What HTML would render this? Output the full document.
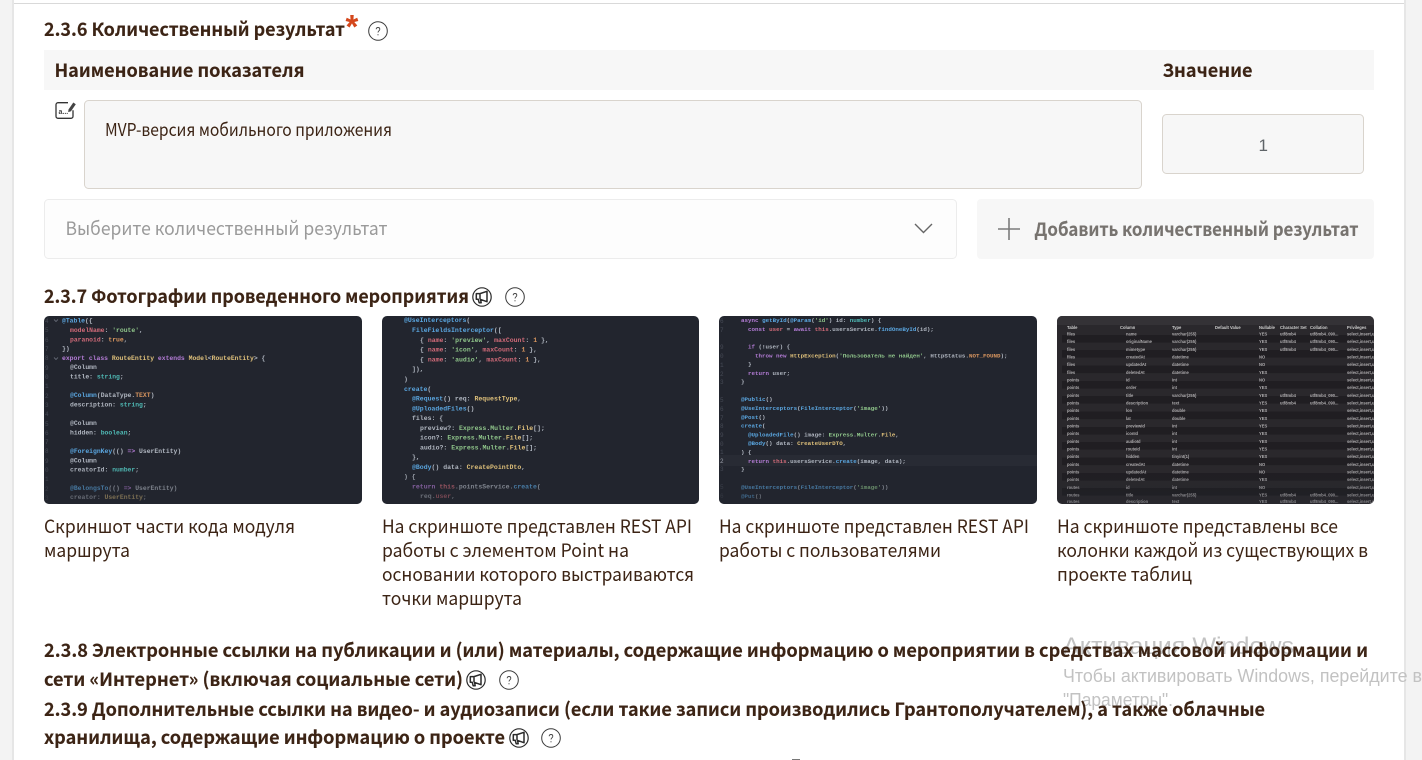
<!DOCTYPE html>
<html lang="ru"><head><meta charset="utf-8"><title>Форма</title>
<style>
html,body{margin:0;padding:0;background:#fff;width:1422px;height:760px;overflow:hidden}
svg{display:block}
.h{font:700 18.5px "Noto Sans CJK SC","Liberation Sans",sans-serif;fill:#3c2415;stroke:#3c2415;stroke-width:.12px}
.t{font:400 17.5px "Noto Sans CJK SC","Liberation Sans",sans-serif;fill:#3c2415}
.c{font:700 6.4px "Liberation Mono",monospace;fill:#b0b6c0}
.i2 .c{font-size:6.5px}.i3 .c{font-size:5.85px}
.n{font:400 6px "Liberation Mono",monospace;fill:#454954}
.m{font:700 4.1px "Liberation Sans",sans-serif;fill:#aeacae}
.w{font:400 18px "Liberation Sans",sans-serif;fill:#c2c2c2}
.pk{fill:#d06a78}.bl{fill:#5aa6e0}.yl{fill:#dfc07a}.gr{fill:#8fc58a}.pu{fill:#b47cd6}.tl{fill:#4fbab5}.or{fill:#d8955f}
</style></head><body>
<svg width="1422" height="760" viewBox="0 0 1422 760" xmlns="http://www.w3.org/2000/svg">
<defs>
<filter id="b" x="-2%" y="-2%" width="104%" height="104%"><feGaussianBlur stdDeviation="0.36"/></filter>
<linearGradient id="fade" x1="0" y1="0" x2="0" y2="1"><stop offset="0.8" stop-color="#22252e" stop-opacity="0"/><stop offset="1" stop-color="#22252e" stop-opacity=".65"/></linearGradient>
<clipPath id="c1"><rect x="44" y="316" width="318" height="188" rx="5"/></clipPath>
<clipPath id="c2"><rect x="382" y="316" width="317" height="188" rx="5"/></clipPath>
<clipPath id="c3"><rect x="719" y="316" width="318" height="188" rx="5"/></clipPath>
<clipPath id="c4"><rect x="1057" y="316" width="317" height="188" rx="5"/></clipPath>
<symbol id="help" viewBox="0 0 20 20"><circle cx="10" cy="10" r="9.300" fill="none" stroke="#3a3a3a" stroke-width="1"/><path d="M8.200 8.300c0-1.100.8-1.800 1.800-1.800s1.800.7 1.800 1.700c0 1.600-1.800 1.600-1.800 3.300" fill="none" stroke="#444" stroke-width=".9"/><circle cx="10" cy="13.800" r=".6" fill="#444"/></symbol>
<symbol id="mega" viewBox="0 0 20 20"><circle cx="10" cy="10" r="9.200" fill="none" stroke="#2b2b2b" stroke-width="1.200"/><path d="M15 4.300 8 6.600H4.300v5.600h1.900l1 3.600h2l-.7-3.400 6.500 2.300zM8 6.600v5.600" fill="none" stroke="#2b2b2b" stroke-width="1.500" stroke-linejoin="round"/></symbol>
</defs>

<rect width="1422" height="760" fill="#fff"/>
<rect x="0" y="0" width="13" height="760" fill="#f3f3f3"/><rect x="12" y="0" width="2" height="760" fill="#e6e6e6"/>
<rect x="1404" y="0" width="18" height="760" fill="#f3f3f3"/><rect x="1404" y="0" width="2" height="760" fill="#e6e6e6"/>
<rect x="14" y="3" width="1390" height="1" fill="#d9d9d9"/>

<text class="h" x="44" y="36" textLength="301" lengthAdjust="spacingAndGlyphs">2.3.6 Количественный результат</text>
<text x="345.500" y="38" font-family="Liberation Sans,sans-serif" font-size="33" font-weight="700" fill="#d4471c">*</text>
<use href="#help" x="368" y="21" width="20" height="20"/>

<rect x="44" y="50" width="1330" height="40" fill="#f7f7f7"/>
<text class="h" x="54.500" y="77" textLength="250" lengthAdjust="spacingAndGlyphs">Наименование показателя</text>
<text class="h" x="1162.500" y="77" textLength="90" lengthAdjust="spacingAndGlyphs">Значение</text>

<path d="M68 102.700H58a2 2 0 0 0-2 2v11.600a2 2 0 0 0 2 2h13a2 2 0 0 0 2-2v-6" fill="none" stroke="#333" stroke-width="1.300"/>
<path d="M68.500 109.500l4.800-7 2.500 1.800-4.800 7-2.800.8z" fill="#444"/>
<text x="58.500" y="114" font-family="Liberation Sans,sans-serif" font-size="7" font-weight="700" fill="#444">a...</text>

<rect x="84.500" y="100.500" width="1057" height="88" rx="4" fill="#f7f7f7" stroke="#d9d4cd"/>
<text class="t" x="105" y="136" textLength="287" lengthAdjust="spacingAndGlyphs">MVP-версия мобильного приложения</text>
<rect x="1162.500" y="114.500" width="201" height="59" rx="4" fill="#f7f7f7" stroke="#d9d4cd"/>
<text x="1258.500" y="151" font-family="Liberation Sans,sans-serif" font-size="17" fill="#5f6468">1</text>

<rect x="44.500" y="199.500" width="912" height="59" rx="4" fill="#fdfdfd" stroke="#ececec"/>
<text class="t" x="65.500" y="235" style="fill:#9a9a9a;font-size:18.5px" textLength="322" lengthAdjust="spacingAndGlyphs">Выберите количественный результат</text>
<path d="M915 224l8.500 8.500 8.500-8.500" fill="none" stroke="#666" stroke-width="1.400"/>
<rect x="977" y="199" width="397" height="60" rx="4" fill="#f7f7f7"/>
<path d="M1009 218v22M998 229h22" stroke="#7b7b7b" stroke-width="1.600" fill="none"/>
<text class="h" x="1034.500" y="236" style="fill:#77736f;stroke:#77736f" textLength="324" lengthAdjust="spacingAndGlyphs">Добавить количественный результат</text>

<text class="h" x="44" y="303" textLength="425" lengthAdjust="spacingAndGlyphs">2.3.7 Фотографии проведенного мероприятия</text>
<use href="#mega" x="472" y="287" width="20" height="20"/>
<use href="#help" x="505" y="287" width="20" height="20"/>

<!-- image 1 -->
<g clip-path="url(#c1)"><rect x="44" y="316" width="318" height="188" fill="#22252e"/>
<g filter="url(#b)">
<text class="n" x="45" y="323">4</text><text class="n" x="45" y="332">5</text><text class="n" x="45" y="342">6</text><text class="n" x="45" y="351">7</text><text class="n" x="45" y="360">8</text><text class="n" x="45" y="370">9</text><text class="n" x="45" y="379">0</text><text class="n" x="45" y="388">1</text><text class="n" x="45" y="398">2</text><text class="n" x="45" y="407">3</text><text class="n" x="45" y="416">4</text><text class="n" x="45" y="426">5</text><text class="n" x="45" y="435">6</text><text class="n" x="45" y="444">7</text><text class="n" x="45" y="453">8</text><text class="n" x="45" y="463">9</text><text class="n" x="45" y="472">0</text><text class="n" x="45" y="481">1</text><text class="n" x="45" y="491">2</text><text class="n" x="45" y="500">3</text>
<path d="M54 319.500l2 2 2-2M54 357.500l2 2 2-2" fill="none" stroke="#777c88" stroke-width=".7"/>
<text class="c" x="62" y="322.500"><tspan class="bl">@Table</tspan>({</text>
<text class="c" x="70" y="332"><tspan class="pk">modelName</tspan>: <tspan class="gr">'route'</tspan>,</text>
<text class="c" x="70" y="341.500"><tspan class="pk">paranoid</tspan>: <tspan class="or">true</tspan>,</text>
<text class="c" x="62" y="350.500">})</text>
<text class="c" x="62" y="360"><tspan class="pu">export class</tspan> <tspan class="yl">RouteEntity</tspan> <tspan class="pu">extends</tspan> <tspan class="yl">Model</tspan>&lt;<tspan class="yl">RouteEntity</tspan>&gt; {</text>
<text class="c" x="70" y="369">@Column</text>
<text class="c" x="70" y="378.500">title: <tspan class="tl">string</tspan>;</text>
<text class="c" x="70" y="397"><tspan class="bl">@Column</tspan>(DataType.<tspan class="or">TEXT</tspan>)</text>
<text class="c" x="70" y="406.500">description: <tspan class="tl">string</tspan>;</text>
<text class="c" x="70" y="425">@Column</text>
<text class="c" x="70" y="434.500">hidden: <tspan class="tl">boolean</tspan>;</text>
<text class="c" x="70" y="453"><tspan class="bl">@ForeignKey</tspan>(() <tspan class="pu">=&gt;</tspan> UserEntity)</text>
<text class="c" x="70" y="462.500">@Column</text>
<text class="c" x="70" y="471.500">creatorId: <tspan class="tl">number</tspan>;</text>
<text class="c" x="70" y="490"><tspan class="bl">@BelongsTo</tspan>(() <tspan class="pu">=&gt;</tspan> UserEntity)</text>
<text class="c" x="70" y="499">creator: <tspan class="yl">UserEntity</tspan>;</text>
</g><rect x="44" y="316" width="318" height="188" fill="url(#fade)"/></g>

<!-- image 2 -->
<g clip-path="url(#c2)" class="i2"><rect x="382" y="316" width="317" height="188" fill="#22252e"/>
<g filter="url(#b)">
<text class="c" x="404" y="322"><tspan class="bl">@UseInterceptors</tspan>(</text>
<text class="c" x="412" y="332"><tspan class="bl">FileFieldsInterceptor</tspan>([</text>
<text class="c" x="420" y="342">{ <tspan class="pk">name</tspan>: <tspan class="gr">'preview'</tspan>, <tspan class="pk">maxCount</tspan>: <tspan class="or">1</tspan> },</text>
<text class="c" x="420" y="351.500">{ <tspan class="pk">name</tspan>: <tspan class="gr">'icon'</tspan>, <tspan class="pk">maxCount</tspan>: <tspan class="or">1</tspan> },</text>
<text class="c" x="420" y="361.500">{ <tspan class="pk">name</tspan>: <tspan class="gr">'audio'</tspan>, <tspan class="pk">maxCount</tspan>: <tspan class="or">1</tspan> },</text>
<text class="c" x="412" y="371">]),</text>
<text class="c" x="404" y="381">)</text>
<text class="c" x="404" y="391"><tspan class="bl">create</tspan>(</text>
<text class="c" x="412" y="400.500"><tspan class="bl">@Request</tspan>() req: <tspan class="yl">RequestType</tspan>,</text>
<text class="c" x="412" y="410.500"><tspan class="bl">@UploadedFiles</tspan>()</text>
<text class="c" x="412" y="420">files: {</text>
<text class="c" x="420" y="430">preview?: <tspan class="gr">Express</tspan>.<tspan class="gr">Multer</tspan>.<tspan class="yl">File</tspan>[];</text>
<text class="c" x="420" y="439.500">icon?: <tspan class="gr">Express</tspan>.<tspan class="gr">Multer</tspan>.<tspan class="yl">File</tspan>[];</text>
<text class="c" x="420" y="449.500">audio?: <tspan class="gr">Express</tspan>.<tspan class="gr">Multer</tspan>.<tspan class="yl">File</tspan>[];</text>
<text class="c" x="412" y="459">},</text>
<text class="c" x="412" y="469"><tspan class="bl">@Body</tspan>() data: <tspan class="yl">CreatePointDto</tspan>,</text>
<text class="c" x="404" y="478.500">) {</text>
<text class="c" x="412" y="488.500"><tspan class="pu">return</tspan> <tspan class="pk">this</tspan>.pointsService.<tspan class="bl">create</tspan>(</text>
<text class="c" x="420" y="498">req.<tspan class="pk">user</tspan>,</text>
</g><rect x="382" y="316" width="317" height="188" fill="url(#fade)"/></g>

<!-- image 3 -->
<g clip-path="url(#c3)" class="i3"><rect x="719" y="316" width="318" height="188" fill="#22252e"/>
<rect x="719" y="455" width="318" height="11" fill="#282b34"/>
<g filter="url(#b)">
<text class="n" x="720" y="323">6</text><text class="n" x="720" y="332">7</text><text class="n" x="720" y="349">9</text><text class="n" x="720" y="358">0</text><text class="n" x="720" y="367">1</text><text class="n" x="720" y="376">2</text><text class="n" x="720" y="384">3</text><text class="n" x="720" y="402">5</text><text class="n" x="720" y="411">6</text><text class="n" x="720" y="420">7</text><text class="n" x="720" y="428">8</text><text class="n" x="720" y="437">9</text><text class="n" x="720" y="446">0</text><text class="n" x="720" y="454">1</text><text class="n" x="720" y="463" style="fill:#9a9ea8">2</text><text class="n" x="720" y="471">3</text><text class="n" x="720" y="489">5</text><text class="n" x="720" y="498">6</text>
<text class="c" x="741" y="322"><tspan class="pu">async</tspan> <tspan class="bl">getById</tspan>(<tspan class="bl">@Param</tspan>(<tspan class="gr">'id'</tspan>) id: <tspan class="tl">number</tspan>) {</text>
<text class="c" x="748" y="331"><tspan class="pu">const</tspan> <tspan class="pk">user</tspan> = <tspan class="pu">await</tspan> <tspan class="pk">this</tspan>.usersService.<tspan class="bl">findOneById</tspan>(id);</text>
<text class="c" x="748" y="348.500"><tspan class="pu">if</tspan> (!user) {</text>
<text class="c" x="755" y="357.500"><tspan class="pu">throw new</tspan> <tspan class="yl">HttpException</tspan>(<tspan class="gr">'Пользователь не найден'</tspan>, HttpStatus.<tspan class="or">NOT_FOUND</tspan>);</text>
<text class="c" x="748" y="366">}</text>
<text class="c" x="748" y="375"><tspan class="pu">return</tspan> user;</text>
<text class="c" x="741" y="383.500">}</text>
<text class="c" x="741" y="401"><tspan class="bl">@Public</tspan>()</text>
<text class="c" x="741" y="410"><tspan class="bl">@UseInterceptors</tspan>(<tspan class="bl">FileInterceptor</tspan>(<tspan class="gr">'image'</tspan>))</text>
<text class="c" x="741" y="419"><tspan class="bl">@Post</tspan>()</text>
<text class="c" x="741" y="427.500"><tspan class="bl">create</tspan>(</text>
<text class="c" x="748" y="436.500"><tspan class="bl">@UploadedFile</tspan>() image: <tspan class="gr">Express</tspan>.<tspan class="gr">Multer</tspan>.<tspan class="yl">File</tspan>,</text>
<text class="c" x="748" y="445"><tspan class="bl">@Body</tspan>() data: <tspan class="yl">CreateUserDTO</tspan>,</text>
<text class="c" x="741" y="454">) {</text>
<text class="c" x="748" y="463"><tspan class="pu">return</tspan> <tspan class="pk">this</tspan>.usersService.<tspan class="bl">create</tspan>(image, data);</text>
<text class="c" x="741" y="471">}</text>
<text class="c" x="741" y="489"><tspan class="bl">@UseInterceptors</tspan>(<tspan class="bl">FileInterceptor</tspan>(<tspan class="gr">'image'</tspan>))</text>
<text class="c" x="741" y="498"><tspan class="bl">@Put</tspan>()</text>
</g><rect x="719" y="316" width="318" height="188" fill="url(#fade)"/></g>

<!-- image 4 -->
<g clip-path="url(#c4)"><rect x="1057" y="316" width="317" height="188" fill="#2a282c"/>
<rect x="1057" y="316" width="317" height="9" fill="#343236"/>
<g fill="#201e22"><rect x="1062" y="335" width="312" height="7.600"/><rect x="1062" y="350" width="312" height="7.600"/><rect x="1062" y="365.500" width="312" height="7.600"/><rect x="1062" y="381" width="312" height="7.600"/><rect x="1062" y="396" width="312" height="7.600"/><rect x="1062" y="411.500" width="312" height="7.600"/><rect x="1062" y="427" width="312" height="7.600"/><rect x="1062" y="442" width="312" height="7.600"/><rect x="1062" y="457.500" width="312" height="7.600"/><rect x="1062" y="473" width="312" height="7.600"/><rect x="1062" y="488" width="312" height="7.600"/></g>
<g filter="url(#b)">
<text class="m" y="329" style="fill:#d0d0d0"><tspan x="1067">Table</tspan><tspan x="1120">Column</tspan><tspan x="1172">Type</tspan><tspan x="1215">Default Value</tspan><tspan x="1259">Nullable</tspan><tspan x="1280">Character Set</tspan><tspan x="1310">Collation</tspan><tspan x="1347">Privileges</tspan></text>
<text class="m" y="335.500"><tspan x="1067">files</tspan><tspan x="1126">name</tspan><tspan x="1172">varchar(255)</tspan><tspan x="1259">YES</tspan><tspan x="1280">utf8mb4</tspan><tspan x="1310">utf8mb4_090...</tspan><tspan x="1347">select,insert,u</tspan></text>
<text class="m" y="343"><tspan x="1067">files</tspan><tspan x="1126">originalName</tspan><tspan x="1172">varchar(255)</tspan><tspan x="1259">YES</tspan><tspan x="1280">utf8mb4</tspan><tspan x="1310">utf8mb4_090...</tspan><tspan x="1347">select,insert,u</tspan></text>
<text class="m" y="351"><tspan x="1067">files</tspan><tspan x="1126">mimetype</tspan><tspan x="1172">varchar(255)</tspan><tspan x="1259">YES</tspan><tspan x="1280">utf8mb4</tspan><tspan x="1310">utf8mb4_090...</tspan><tspan x="1347">select,insert,u</tspan></text>
<text class="m" y="358.500"><tspan x="1067">files</tspan><tspan x="1126">createdAt</tspan><tspan x="1172">datetime</tspan><tspan x="1259">NO</tspan><tspan x="1347">select,insert,u</tspan></text>
<text class="m" y="366"><tspan x="1067">files</tspan><tspan x="1126">updatedAt</tspan><tspan x="1172">datetime</tspan><tspan x="1259">NO</tspan><tspan x="1347">select,insert,u</tspan></text>
<text class="m" y="374"><tspan x="1067">files</tspan><tspan x="1126">deletedAt</tspan><tspan x="1172">datetime</tspan><tspan x="1259">YES</tspan><tspan x="1347">select,insert,u</tspan></text>
<text class="m" y="381.500"><tspan x="1067">points</tspan><tspan x="1126">id</tspan><tspan x="1172">int</tspan><tspan x="1259">NO</tspan><tspan x="1347">select,insert,u</tspan></text>
<text class="m" y="389"><tspan x="1067">points</tspan><tspan x="1126">order</tspan><tspan x="1172">int</tspan><tspan x="1259">YES</tspan><tspan x="1347">select,insert,u</tspan></text>
<text class="m" y="397"><tspan x="1067">points</tspan><tspan x="1126">title</tspan><tspan x="1172">varchar(255)</tspan><tspan x="1259">YES</tspan><tspan x="1280">utf8mb4</tspan><tspan x="1310">utf8mb4_090...</tspan><tspan x="1347">select,insert,u</tspan></text>
<text class="m" y="404.500"><tspan x="1067">points</tspan><tspan x="1126">description</tspan><tspan x="1172">text</tspan><tspan x="1259">YES</tspan><tspan x="1280">utf8mb4</tspan><tspan x="1310">utf8mb4_090...</tspan><tspan x="1347">select,insert,u</tspan></text>
<text class="m" y="412"><tspan x="1067">points</tspan><tspan x="1126">lon</tspan><tspan x="1172">double</tspan><tspan x="1259">YES</tspan><tspan x="1347">select,insert,u</tspan></text>
<text class="m" y="420"><tspan x="1067">points</tspan><tspan x="1126">lat</tspan><tspan x="1172">double</tspan><tspan x="1259">YES</tspan><tspan x="1347">select,insert,u</tspan></text>
<text class="m" y="427.500"><tspan x="1067">points</tspan><tspan x="1126">previewId</tspan><tspan x="1172">int</tspan><tspan x="1259">YES</tspan><tspan x="1347">select,insert,u</tspan></text>
<text class="m" y="435"><tspan x="1067">points</tspan><tspan x="1126">iconId</tspan><tspan x="1172">int</tspan><tspan x="1259">YES</tspan><tspan x="1347">select,insert,u</tspan></text>
<text class="m" y="443"><tspan x="1067">points</tspan><tspan x="1126">audioId</tspan><tspan x="1172">int</tspan><tspan x="1259">YES</tspan><tspan x="1347">select,insert,u</tspan></text>
<text class="m" y="450.500"><tspan x="1067">points</tspan><tspan x="1126">routeId</tspan><tspan x="1172">int</tspan><tspan x="1259">YES</tspan><tspan x="1347">select,insert,u</tspan></text>
<text class="m" y="458"><tspan x="1067">points</tspan><tspan x="1126">hidden</tspan><tspan x="1172">tinyint(1)</tspan><tspan x="1259">YES</tspan><tspan x="1347">select,insert,u</tspan></text>
<text class="m" y="466"><tspan x="1067">points</tspan><tspan x="1126">createdAt</tspan><tspan x="1172">datetime</tspan><tspan x="1259">NO</tspan><tspan x="1347">select,insert,u</tspan></text>
<text class="m" y="473.500"><tspan x="1067">points</tspan><tspan x="1126">updatedAt</tspan><tspan x="1172">datetime</tspan><tspan x="1259">NO</tspan><tspan x="1347">select,insert,u</tspan></text>
<text class="m" y="481"><tspan x="1067">points</tspan><tspan x="1126">deletedAt</tspan><tspan x="1172">datetime</tspan><tspan x="1259">YES</tspan><tspan x="1347">select,insert,u</tspan></text>
<text class="m" y="489"><tspan x="1067">routes</tspan><tspan x="1126">id</tspan><tspan x="1172">int</tspan><tspan x="1259">NO</tspan><tspan x="1347">select,insert,u</tspan></text>
<text class="m" y="496.500"><tspan x="1067">routes</tspan><tspan x="1126">title</tspan><tspan x="1172">varchar(255)</tspan><tspan x="1259">YES</tspan><tspan x="1280">utf8mb4</tspan><tspan x="1310">utf8mb4_090...</tspan><tspan x="1347">select,insert,u</tspan></text>
<text class="m" y="503"><tspan x="1067">routes</tspan><tspan x="1126">description</tspan><tspan x="1172">text</tspan><tspan x="1259">YES</tspan><tspan x="1280">utf8mb4</tspan><tspan x="1310">utf8mb4_090...</tspan><tspan x="1347">select,insert,u</tspan></text>
</g><rect x="1057" y="316" width="317" height="188" fill="url(#fade)" opacity=".5"/></g>

<!-- captions -->
<g>
<text class="t" style="font-size:18.5px" x="44" y="533" textLength="251" lengthAdjust="spacingAndGlyphs">Скриншот части кода модуля</text>
<text class="t" style="font-size:18.5px" x="44" y="557" textLength="86" lengthAdjust="spacingAndGlyphs">маршрута</text>
<text class="t" style="font-size:18.5px" x="382" y="533" textLength="310" lengthAdjust="spacingAndGlyphs">На скриншоте представлен REST API</text>
<text class="t" style="font-size:18.5px" x="382" y="557" textLength="247" lengthAdjust="spacingAndGlyphs">работы с элементом Point на</text>
<text class="t" style="font-size:18.5px" x="382" y="581" textLength="312" lengthAdjust="spacingAndGlyphs">основании которого выстраиваются</text>
<text class="t" style="font-size:18.5px" x="382" y="605" textLength="140" lengthAdjust="spacingAndGlyphs">точки маршрута</text>
<text class="t" style="font-size:18.5px" x="719" y="533" textLength="310" lengthAdjust="spacingAndGlyphs">На скриншоте представлен REST API</text>
<text class="t" style="font-size:18.5px" x="719" y="557" textLength="222" lengthAdjust="spacingAndGlyphs">работы с пользователями</text>
<text class="t" style="font-size:18.5px" x="1057" y="533" textLength="281" lengthAdjust="spacingAndGlyphs">На скриншоте представлены все</text>
<text class="t" style="font-size:18.5px" x="1057" y="557" textLength="311" lengthAdjust="spacingAndGlyphs">колонки каждой из существующих в</text>
<text class="t" style="font-size:18.5px" x="1057" y="581" textLength="135" lengthAdjust="spacingAndGlyphs">проекте таблиц</text>
</g>

<!-- windows watermark below -->
<text class="w" x="1063" y="654" style="font-size:24px" textLength="231" lengthAdjust="spacingAndGlyphs">Активация Windows</text>
<text class="w" x="1063" y="682" textLength="359" lengthAdjust="spacingAndGlyphs">Чтобы активировать Windows, перейдите в</text>
<text class="w" x="1063" y="706" textLength="110" lengthAdjust="spacingAndGlyphs">"Параметры".</text>

<text class="h" x="44" y="657" textLength="1324" lengthAdjust="spacingAndGlyphs">2.3.8 Электронные ссылки на публикации и (или) материалы, содержащие информацию о мероприятии в средствах массовой информации и</text>
<text class="h" x="44" y="686" textLength="419" lengthAdjust="spacingAndGlyphs">сети «Интернет» (включая социальные сети)</text>
<use href="#mega" x="466" y="670" width="20" height="20"/>
<use href="#help" x="499" y="670" width="20" height="20"/>
<text class="h" x="44" y="716" textLength="1221" lengthAdjust="spacingAndGlyphs">2.3.9 Дополнительные ссылки на видео- и аудиозаписи (если такие записи производились Грантополучателем), а также облачные</text>
<text class="h" x="44" y="744" textLength="461" lengthAdjust="spacingAndGlyphs">хранилища, содержащие информацию о проекте</text>
<use href="#mega" x="509" y="728" width="20" height="20"/>
<use href="#help" x="541" y="728" width="20" height="20"/>
<rect x="792" y="759" width="8" height="1" fill="#777"/>
</svg>
</body></html>
